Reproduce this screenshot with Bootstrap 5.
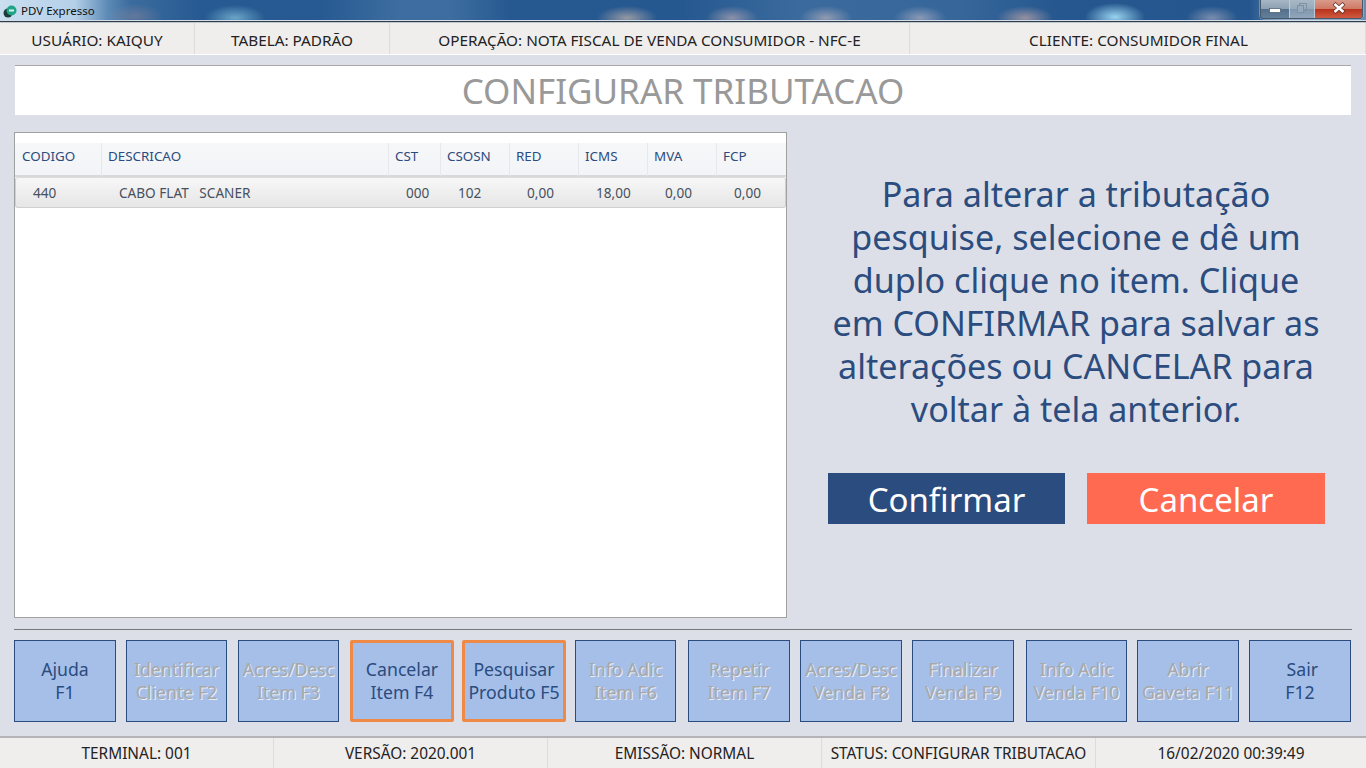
<!DOCTYPE html>
<html lang="pt-BR">
<head>
<meta charset="utf-8">
<title>PDV Expresso</title>
<link href="https://cdn.jsdelivr.net/npm/bootstrap@5.3.0/dist/css/bootstrap.min.css" rel="stylesheet">
<style>
html,body{height:768px;overflow:hidden}
body{background:#dcdfe7;font-family:"Noto Sans","Open Sans","Liberation Sans",sans-serif;color:#2b4c7e}
.app-shell{width:1366px;height:768px}
.app-shell>*{flex-shrink:0}
.win-title{height:23px;border-bottom:1px solid #bfc6cc;box-shadow:inset 0 -1px 0 #2f3d4c,inset 0 -2px 0 #d3dde6;
 background:
 radial-gradient(ellipse 28px 12px at 135px 16px,rgba(190,150,150,.3),transparent),
 radial-gradient(ellipse 30px 13px at 235px 18px,rgba(150,215,235,.6),transparent),
 radial-gradient(ellipse 30px 12px at 627px 18px,rgba(225,195,175,.6),transparent),
 radial-gradient(ellipse 26px 12px at 732px 18px,rgba(215,185,185,.55),transparent),
 radial-gradient(ellipse 26px 12px at 826px 18px,rgba(215,195,195,.55),transparent),
 radial-gradient(ellipse 26px 12px at 920px 18px,rgba(205,195,205,.55),transparent),
 radial-gradient(ellipse 28px 12px at 1025px 18px,rgba(220,180,170,.6),transparent),
 radial-gradient(ellipse 30px 14px at 1115px 17px,rgba(165,225,250,.9),transparent),
 radial-gradient(ellipse 26px 12px at 1212px 18px,rgba(205,195,205,.5),transparent),
 linear-gradient(90deg,rgba(0,0,0,0) 1250px,rgba(160,185,205,.55) 1290px),
 linear-gradient(90deg,rgba(0,0,0,0) 320px,rgba(85,130,175,.5) 400px,rgba(85,130,175,.5) 450px,rgba(0,0,0,0) 510px,rgba(0,0,0,0) 683px,rgba(85,130,175,.45) 800px,rgba(85,130,175,.35) 960px,rgba(0,0,0,0) 1060px),
 linear-gradient(90deg,#cbdff0 0,#b4cfe8 75px,#5c8ab6 108px,#3c6c9e 130px,#275a92 200px,#25568d 100%)}
.win-name{font:11.5px "Noto Sans",sans-serif;color:#111;padding-left:3px;gap:4px;height:21px}
.win-ctrls{height:19px;margin-right:3px;border:1px solid #46586b;border-top:0;border-radius:0 0 4px 4px;overflow:hidden;box-shadow:0 0 0 1px rgba(220,230,240,.35)}
.win-btn{display:flex;align-items:flex-start;justify-content:center;height:100%}
.win-min{width:29px;background:linear-gradient(#a7b6c4 0,#8ba0b4 50%,#536f8b 52%,#647f9a 100%);border-right:1px solid #bccad6}
.win-max{width:25px;background:linear-gradient(#a9b8c5 0,#96a9ba 50%,#8098ae 52%,#91a6b9 100%);border-right:1px solid #bccad6}
.win-close{width:47px;background:linear-gradient(#d99a8a 0,#cf7a66 48%,#b9331c 52%,#cf5a40 100%)}
.info-strip{background:#f0eded;color:#222;font-size:15.3px;height:32px;border-bottom:1px solid #fff}
.info-cell{display:flex;align-items:center;justify-content:center;border-right:1px solid #dcdcdc;height:31px;padding-top:3px}
.top-a{width:195px}.top-b{width:195px}.top-c{width:520px}.top-d{width:456px;padding-left:2px}
.page-title{margin:10px 15px 0;width:1336px;height:50px;background:#fff;border-top:1px solid #a8a8a8;color:#999;font-size:35px;line-height:49px;text-align:center}
.work-area{height:486px;margin-top:17px;padding-left:14px}
.grid-box{width:773px;height:486px;background:#fff;border:1px solid #a0a0a0;padding-top:10px}
.tax-table{table-layout:fixed;width:771px;border-collapse:separate;border-spacing:0;font-size:13.6px}
.tax-table th{font-weight:400;font-size:13.4px;height:34px;padding:0 0 6px 6px;border-right:1px solid #e6e8ee;border-bottom:2px solid #d8d8d8;background:linear-gradient(#f6f7f9,#f3f4f7);color:#2b4c7e;white-space:nowrap}
.tax-table th:first-child{padding-left:7px}
.tax-table th:last-child{border-right:0}
.tax-table td{height:31px;padding:2px 0 0 17px;background:linear-gradient(#f7f7f7,#e6e6e6);color:#47505e;border-top:1px solid #dcdcdc;border-bottom:1px solid #d0d0d0;white-space:pre}
.tax-table td:first-child{border-left:1px solid #d0d0d0;border-radius:3px 0 0 3px}
.tax-table td:last-child{border-right:1px solid #d0d0d0;border-radius:0 3px 3px 0}
.help-side{width:565px;padding-left:41px}
.help-text{width:496px;font-size:34.1px;line-height:43px;text-align:center;margin-top:41px;color:#2b4c7e}
.act-row{margin-top:42px;gap:22px}
.act-btn{height:51px;font-size:33px;line-height:49px;color:#fff;text-align:center;border:0;padding:2px 0 0;border-radius:0}
.act-ok{width:237px;background:#2b4c7e}
.act-no{width:238px;background:#ff6a50}
.sep-line{margin:11px 14px 0;width:1338px;height:1px;background:#777}
.key-row{padding:10px 0 0 14px;height:92px}
.fkey{height:82px;width:102px;padding:0;background:#a5bfe9;border:1px solid #2b4c7e;color:#2b4c7e;font-size:17.7px;line-height:23px;text-align:center;border-radius:0;white-space:nowrap}
.fkey.is-off{color:#a8a8a8;text-shadow:1px 1px 0 #e8eef8}
.fkey.is-hot{border:3px solid #ee8a46;border-radius:2px;width:104px}
.fkey:nth-child(2){margin-left:10px;width:101px}
.fkey:nth-child(3){margin-left:11px;width:101px}
.fkey:nth-child(4){margin-left:11px}
.fkey:nth-child(5){margin-left:8px}
.fkey:nth-child(6){margin-left:9px;width:101px}
.fkey:nth-child(7){margin-left:12px}
.fkey:nth-child(8){margin-left:10px}
.fkey:nth-child(9){margin-left:10px}
.fkey:nth-child(10){margin-left:12px;width:101px}
.fkey:nth-child(11){margin-left:10px}
.fkey:nth-child(12){margin-left:10px}
.status-strip{margin-top:14px;height:32px;background:#f0eded;border-top:2px solid #b4b4b8;color:#222;font-size:15.4px}
.stat-cell{flex:0 0 274px;display:flex;align-items:center;justify-content:center;border-right:1px solid #dcdcdc;height:30px;padding-top:1px}
.stat-cell:last-child{flex-basis:270px;border-right:0}
</style>
</head>
<body>
<div class="app-shell d-flex flex-column">
  <div class="win-title d-flex justify-content-between align-items-start">
    <div class="win-name d-flex align-items-center">
      <svg width="14" height="14" viewBox="0 0 14 14"><circle cx="5" cy="9" r="4.5" fill="#1d3b3a"/><circle cx="8.5" cy="6.5" r="5" fill="#1fa487"/><rect x="6" y="5.5" width="5" height="2" fill="#d8f2ea"/></svg>
      <span>PDV Expresso</span>
    </div>
    <div class="win-ctrls d-flex">
      <div class="win-btn win-min"><svg width="14" height="18" viewBox="0 0 14 18"><rect x="1.5" y="8.5" width="11" height="4" fill="#fff" stroke="#46586b" stroke-width=".7"/></svg></div>
      <div class="win-btn win-max"><svg width="12" height="16" viewBox="0 0 12 16" fill="none" stroke="#7c91a5"><rect x="3.5" y="3.5" width="7" height="7"/><rect x="1.5" y="5.5" width="6" height="7" fill="#98abbc"/></svg></div>
      <div class="win-btn win-close"><svg width="14" height="16" viewBox="0 0 14 16"><path d="M2 3.5l10 9M12 3.5l-10 9" stroke="#5a2a24" stroke-width="3.8"/><path d="M2.5 4l9 8M11.5 4l-9 8" stroke="#fff" stroke-width="2.6"/></svg></div>
    </div>
  </div>

  <div class="info-strip d-flex">
    <div class="info-cell top-a">USUÁRIO: KAIQUY</div>
    <div class="info-cell top-b">TABELA: PADRÃO</div>
    <div class="info-cell top-c">OPERAÇÃO: NOTA FISCAL DE VENDA CONSUMIDOR - NFC-E</div>
    <div class="info-cell top-d">CLIENTE: CONSUMIDOR FINAL</div>
  </div>

  <div class="page-title">CONFIGURAR TRIBUTACAO</div>

  <div class="work-area d-flex">
    <div class="grid-box">
      <table class="tax-table">
        <colgroup><col style="width:87px"><col style="width:287px"><col style="width:52px"><col style="width:69px"><col style="width:69px"><col style="width:69px"><col style="width:69px"><col style="width:69px"></colgroup>
        <thead><tr><th>CODIGO</th><th>DESCRICAO</th><th>CST</th><th>CSOSN</th><th>RED</th><th>ICMS</th><th>MVA</th><th>FCP</th></tr></thead>
        <tbody><tr><td>440</td><td>CABO FLAT   SCANER</td><td>000</td><td>102</td><td>0,00</td><td>18,00</td><td>0,00</td><td>0,00</td></tr></tbody>
      </table>
    </div>
    <div class="help-side">
      <div class="help-text">Para alterar a tributação pesquise, selecione e dê um duplo clique no item. Clique em CONFIRMAR para salvar as alterações ou CANCELAR para voltar à tela anterior.</div>
      <div class="act-row d-flex">
        <button class="btn act-btn act-ok">Confirmar</button>
        <button class="btn act-btn act-no">Cancelar</button>
      </div>
    </div>
  </div>

  <div class="sep-line"></div>

  <div class="key-row d-flex">
    <button class="btn fkey">Ajuda<br>F1</button>
    <button class="btn fkey is-off">Identificar<br>Cliente F2</button>
    <button class="btn fkey is-off">Acres/Desc<br>Item F3</button>
    <button class="btn fkey is-hot">Cancelar<br>Item F4</button>
    <button class="btn fkey is-hot">Pesquisar<br>Produto F5</button>
    <button class="btn fkey is-off">Info Adic<br>Item F6</button>
    <button class="btn fkey is-off">Repetir<br>Item F7</button>
    <button class="btn fkey is-off">Acres/Desc<br>Venda F8</button>
    <button class="btn fkey is-off">Finalizar<br>Venda F9</button>
    <button class="btn fkey is-off">Info Adic<br>Venda F10</button>
    <button class="btn fkey is-off">Abrir<br>Gaveta F11</button>
    <button class="btn fkey">&nbsp;Sair<br>F12</button>
  </div>

  <div class="status-strip d-flex">
    <div class="stat-cell">TERMINAL: 001</div>
    <div class="stat-cell">VERSÃO: 2020.001</div>
    <div class="stat-cell">EMISSÃO: NORMAL</div>
    <div class="stat-cell">STATUS: CONFIGURAR TRIBUTACAO</div>
    <div class="stat-cell">16/02/2020 00:39:49</div>
  </div>
</div>
<script src="https://cdn.jsdelivr.net/npm/bootstrap@5.3.0/dist/js/bootstrap.bundle.min.js"></script>
</body>
</html>
